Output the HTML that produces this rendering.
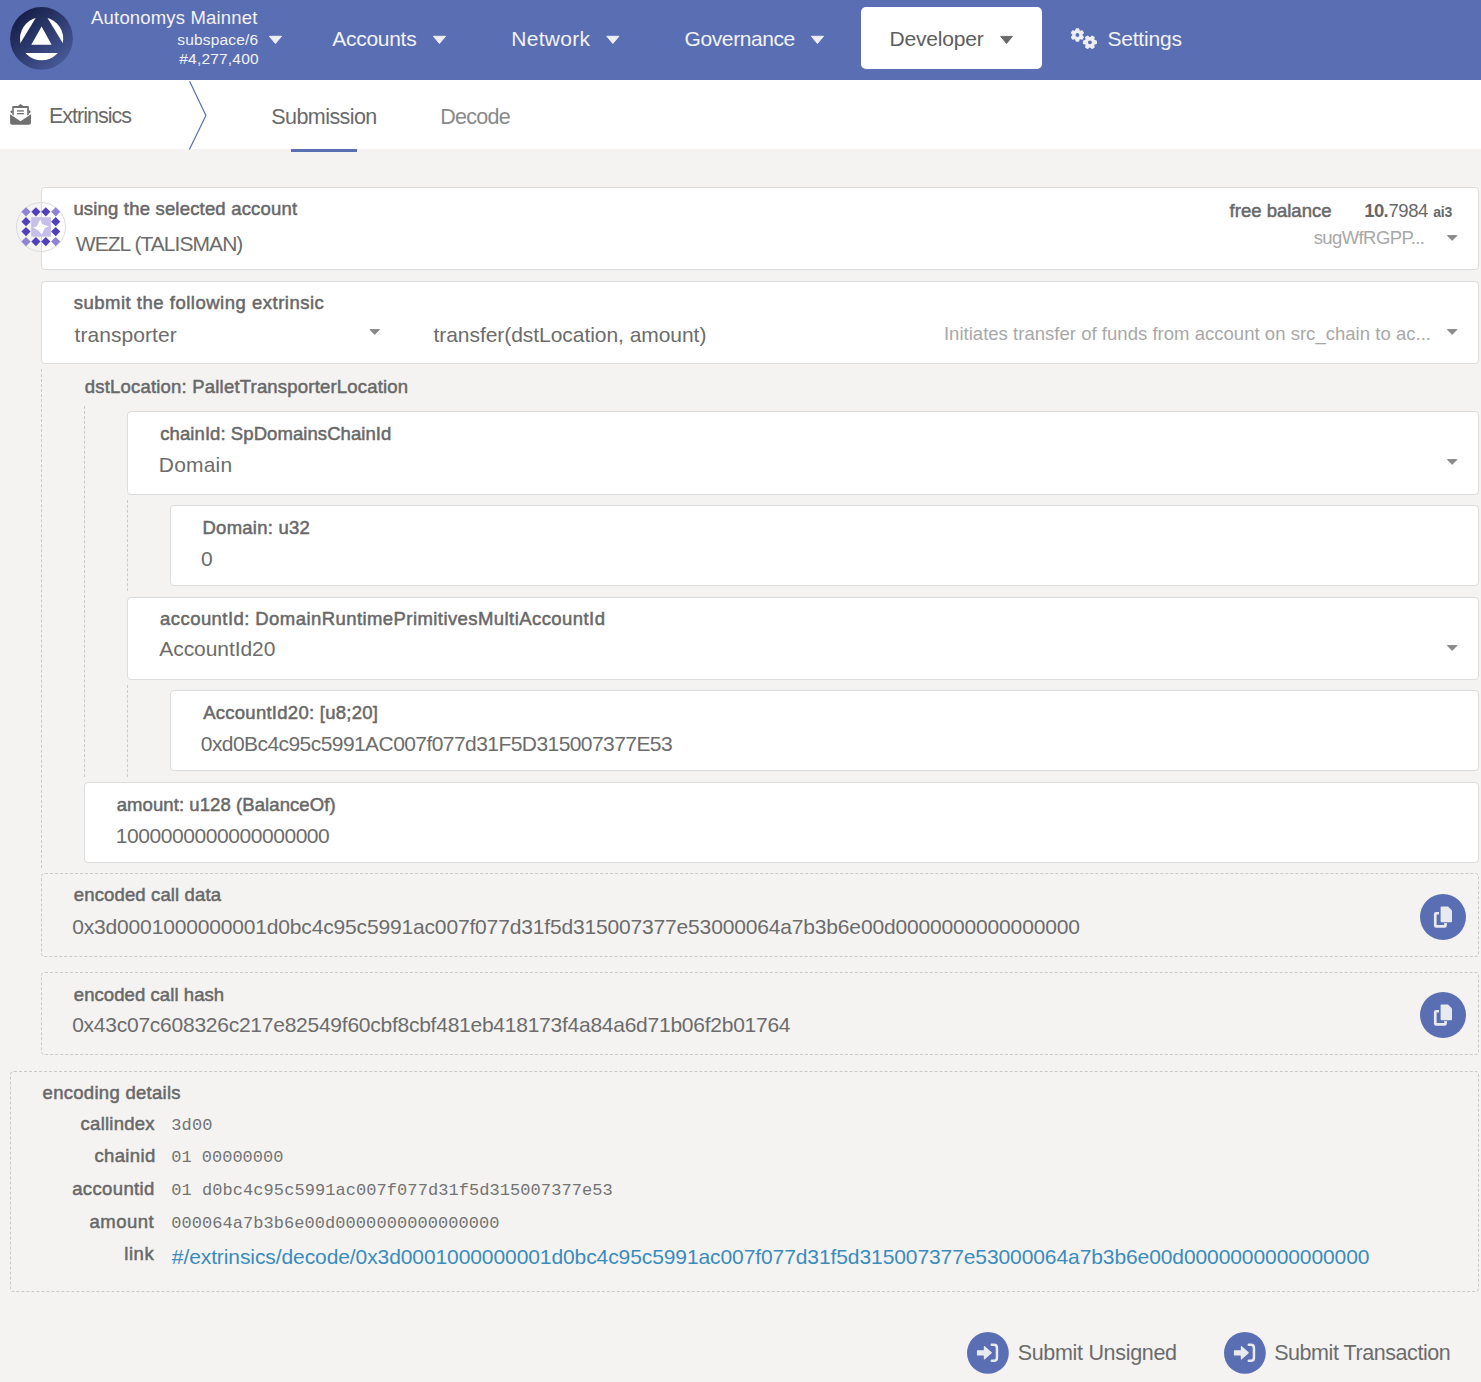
<!DOCTYPE html><html><head><meta charset="utf-8"><title>Extrinsics</title><style>
html,body{margin:0;padding:0}
body{width:1481px;height:1382px;overflow:hidden;position:relative;background:#f4f3f2;font-family:"Liberation Sans",sans-serif}
.t{position:absolute;white-space:pre;line-height:normal}
</style></head><body>
<div style="position:absolute;left:0px;top:0px;width:1481px;height:80px;background:#5a6fb3;"></div>
<div style="position:absolute;left:0px;top:80px;width:1481px;height:69px;background:#ffffff;"></div>
<svg style="position:absolute;left:0;top:0" width="84" height="80" viewBox="0 0 84 80">
<defs><linearGradient id="lg" gradientUnits="userSpaceOnUse" x1="18" y1="12" x2="66" y2="66"><stop offset="0" stop-color="#131c44"/><stop offset="1" stop-color="#4b5d9e"/></linearGradient></defs>
<circle cx="41.5" cy="38.4" r="31.4" fill="url(#lg)"/>
<circle cx="41.6" cy="38.7" r="21.6" fill="#fff"/>
<path d="M41.6 8.2 L68.8 53 L14.4 53 Z" fill="url(#lg)"/>
<path d="M41.6 26.6 L51.6 44.8 L31.3 44.8 Z" fill="#fff"/>
</svg>
<svg style="position:absolute;left:267px;top:34px" width="17" height="12" viewBox="0 0 17 12"><path d="M2.40 2.30 L14.50 2.30 L8.45 9.50 Z" fill="#eeeef4" stroke="#eeeef4" stroke-width="1" stroke-linejoin="round"/></svg>
<svg style="position:absolute;left:431px;top:34px" width="17" height="12" viewBox="0 0 17 12"><path d="M2.40 2.30 L14.50 2.30 L8.45 9.50 Z" fill="#eeeef4" stroke="#eeeef4" stroke-width="1" stroke-linejoin="round"/></svg>
<svg style="position:absolute;left:605px;top:34px" width="17" height="12" viewBox="0 0 17 12"><path d="M1.80 2.30 L13.90 2.30 L7.85 9.50 Z" fill="#eeeef4" stroke="#eeeef4" stroke-width="1" stroke-linejoin="round"/></svg>
<svg style="position:absolute;left:809px;top:34px" width="17" height="12" viewBox="0 0 17 12"><path d="M2.40 2.30 L14.50 2.30 L8.45 9.50 Z" fill="#eeeef4" stroke="#eeeef4" stroke-width="1" stroke-linejoin="round"/></svg>
<div style="position:absolute;left:861px;top:7px;width:181px;height:62px;background:#fff;border-radius:5px"></div>
<svg style="position:absolute;left:999px;top:34px" width="16" height="12" viewBox="0 0 16 12"><path d="M1.70 2.40 L13.40 2.40 L7.55 9.40 Z" fill="#6a6a6a" stroke="#6a6a6a" stroke-width="1" stroke-linejoin="round"/></svg>
<svg style="position:absolute;left:1064px;top:22px" width="40" height="32" viewBox="0 0 40 32">
<path d="M11.45 9.62 L12.32 6.89 L14.48 6.89 L15.35 9.62 L18.15 9.01 L19.23 10.88 L17.30 13.00 L19.23 15.12 L18.15 16.99 L15.35 16.38 L14.48 19.11 L12.32 19.11 L11.45 16.38 L8.65 16.99 L7.57 15.12 L9.50 13.00 L7.57 10.88 L8.65 9.01 Z" fill="#eeeef4" stroke="#eeeef4" stroke-width="1.4" stroke-linejoin="round"/>
<path d="M29.45 18.25 L32.20 19.19 L32.20 21.41 L29.45 22.35 L30.01 25.20 L28.09 26.31 L25.90 24.40 L23.71 26.31 L21.79 25.20 L22.35 22.35 L19.60 21.41 L19.60 19.19 L22.35 18.25 L21.79 15.40 L23.71 14.29 L25.90 16.20 L28.09 14.29 L30.01 15.40 Z" fill="#eeeef4" stroke="#eeeef4" stroke-width="1.4" stroke-linejoin="round"/>
<circle cx="13.4" cy="13" r="1.9" fill="#5a6fb3"/><circle cx="25.9" cy="20.3" r="1.9" fill="#5a6fb3"/>
</svg>
<svg style="position:absolute;left:6px;top:98px" width="30" height="30" viewBox="0 0 30 30">
<g fill="#707070">
<path d="M11.6 8.3 L14.5 5.9 L17.6 8.3 Z"/>
<path d="M7.2 8.1 L21.9 8.1 Q22.9 8.1 22.9 9.1 L22.9 16.6 L21.2 17.6 L21.2 9.9 L7.8 9.9 L7.8 17.6 L6.2 16.6 L6.2 9.1 Q6.2 8.1 7.2 8.1 Z"/>
<path d="M6.2 11.7 L4.1 13.9 L6.2 15.6 Z"/>
<path d="M22.9 11.7 L25 13.9 L22.9 15.6 Z"/>
<rect x="11" y="12.3" width="6.9" height="1.3"/>
<rect x="11" y="15" width="6.9" height="1.3"/>
<path d="M4.1 16.3 L14.5 23.3 L25 16.3 L25 24.7 Q25 26.7 23 26.7 L6.1 26.7 Q4.1 26.7 4.1 24.7 Z"/>
</g></svg>
<svg style="position:absolute;left:180px;top:80px" width="40" height="70" viewBox="0 0 40 70"><path d="M9.6 1.3 L25.9 35.4 L9.4 69.4" fill="none" stroke="#5a6fb3" stroke-width="1.2"/></svg>
<div style="position:absolute;left:291px;top:149px;width:66px;height:3px;background:#5a6fb3;"></div>
<div style="position:absolute;left:41px;top:187px;width:1438px;height:83px;box-sizing:border-box;background:#fff;border:1px solid #dcdcdc;border-radius:4px"></div>
<div style="position:absolute;left:41px;top:281px;width:1438px;height:83px;box-sizing:border-box;background:#fff;border:1px solid #dcdcdc;border-radius:4px"></div>
<div style="position:absolute;left:41px;top:369px;width:0;height:499px;border-left:1px dashed #c9c9c9"></div>
<div style="position:absolute;left:84px;top:406px;width:0;height:371px;border-left:1px dashed #c9c9c9"></div>
<div style="position:absolute;left:127px;top:411px;width:1352px;height:84px;box-sizing:border-box;background:#fff;border:1px solid #dcdcdc;border-radius:4px"></div>
<div style="position:absolute;left:127px;top:500px;width:0;height:91px;border-left:1px dashed #c9c9c9"></div>
<div style="position:absolute;left:170px;top:505px;width:1309px;height:81px;box-sizing:border-box;background:#fff;border:1px solid #dcdcdc;border-radius:4px"></div>
<div style="position:absolute;left:127px;top:597px;width:1352px;height:83px;box-sizing:border-box;background:#fff;border:1px solid #dcdcdc;border-radius:4px"></div>
<div style="position:absolute;left:127px;top:685px;width:0;height:92px;border-left:1px dashed #c9c9c9"></div>
<div style="position:absolute;left:170px;top:690px;width:1309px;height:81px;box-sizing:border-box;background:#fff;border:1px solid #dcdcdc;border-radius:4px"></div>
<div style="position:absolute;left:84px;top:782px;width:1395px;height:81px;box-sizing:border-box;background:#fff;border:1px solid #dcdcdc;border-radius:4px"></div>
<div style="position:absolute;left:41px;top:873px;width:1438px;height:84px;box-sizing:border-box;background:transparent;border:1px dashed #c9c9c9;border-radius:4px"></div>
<div style="position:absolute;left:41px;top:972px;width:1438px;height:83px;box-sizing:border-box;background:transparent;border:1px dashed #c9c9c9;border-radius:4px"></div>
<div style="position:absolute;left:10px;top:1071px;width:1469px;height:221px;box-sizing:border-box;background:transparent;border:1px dashed #c9c9c9;border-radius:4px"></div>
<svg style="position:absolute;left:1445px;top:234px" width="15" height="9" viewBox="0 0 15 9"><path d="M2.40 1.60 L11.90 1.60 L7.15 6.40 Z" fill="#8a8a8a" stroke="#8a8a8a" stroke-width="1" stroke-linejoin="round"/></svg>
<svg style="position:absolute;left:368px;top:328px" width="14" height="9" viewBox="0 0 14 9"><path d="M2.00 1.60 L11.50 1.60 L6.75 6.40 Z" fill="#8a8a8a" stroke="#8a8a8a" stroke-width="1" stroke-linejoin="round"/></svg>
<svg style="position:absolute;left:1445px;top:328px" width="15" height="9" viewBox="0 0 15 9"><path d="M2.40 1.60 L11.90 1.60 L7.15 6.40 Z" fill="#8a8a8a" stroke="#8a8a8a" stroke-width="1" stroke-linejoin="round"/></svg>
<svg style="position:absolute;left:1445px;top:458px" width="15" height="9" viewBox="0 0 15 9"><path d="M2.40 1.60 L11.90 1.60 L7.15 6.40 Z" fill="#8a8a8a" stroke="#8a8a8a" stroke-width="1" stroke-linejoin="round"/></svg>
<svg style="position:absolute;left:1445px;top:644px" width="15" height="9" viewBox="0 0 15 9"><path d="M2.40 1.60 L11.90 1.60 L7.15 6.40 Z" fill="#8a8a8a" stroke="#8a8a8a" stroke-width="1" stroke-linejoin="round"/></svg>
<svg style="position:absolute;left:16px;top:202px" width="50" height="50" viewBox="0 0 50 50"><circle cx="25" cy="25" r="24.5" fill="none" stroke="#dadada" stroke-width="1"/><path d="M10 5.200000000000012 L14.6 9.800000000000011 L10 14.400000000000011 L5.4 9.800000000000011 Z" fill="#8f83d8"/><path d="M19.9 5.200000000000012 L24.5 9.800000000000011 L19.9 14.400000000000011 L15.299999999999999 9.800000000000011 Z" fill="#5040bb"/><path d="M29.799999999999997 5.200000000000012 L34.4 9.800000000000011 L29.799999999999997 14.400000000000011 L25.199999999999996 9.800000000000011 Z" fill="#5040bb"/><path d="M39.7 5.200000000000012 L44.300000000000004 9.800000000000011 L39.7 14.400000000000011 L35.1 9.800000000000011 Z" fill="#8f83d8"/><path d="M10 15.099999999999989 L14.6 19.69999999999999 L10 24.29999999999999 L5.4 19.69999999999999 Z" fill="#5040bb"/><path d="M39.7 15.099999999999989 L44.300000000000004 19.69999999999999 L39.7 24.29999999999999 L35.1 19.69999999999999 Z" fill="#5040bb"/><path d="M10 24.999999999999993 L14.6 29.599999999999994 L10 34.199999999999996 L5.4 29.599999999999994 Z" fill="#5040bb"/><path d="M39.7 24.999999999999993 L44.300000000000004 29.599999999999994 L39.7 34.199999999999996 L35.1 29.599999999999994 Z" fill="#5040bb"/><path d="M10 34.99999999999999 L14.6 39.599999999999994 L10 44.199999999999996 L5.4 39.599999999999994 Z" fill="#8f83d8"/><path d="M19.9 34.99999999999999 L24.5 39.599999999999994 L19.9 44.199999999999996 L15.299999999999999 39.599999999999994 Z" fill="#5040bb"/><path d="M29.799999999999997 34.99999999999999 L34.4 39.599999999999994 L29.799999999999997 44.199999999999996 L25.199999999999996 39.599999999999994 Z" fill="#5040bb"/><path d="M39.7 34.99999999999999 L44.300000000000004 39.599999999999994 L39.7 44.199999999999996 L35.1 39.599999999999994 Z" fill="#8f83d8"/><rect x="15.2" y="15.2" width="19.7" height="19.5" fill="#c6bfea"/><path d="M24.3 17.3 L26 22 L33 24.4 L28.8 26.1 L25.6 32.7 Q23.5 28 16.8 25.8 L20.9 24.3 Z" fill="#fff"/></svg>
<svg style="position:absolute;left:1420px;top:893.9px" width="46" height="46" viewBox="0 0 46 46"><circle cx="23" cy="23" r="23" fill="#5a6fb3"/><g transform="translate(23,23)"><path d="M-1.4 -10.5 L5 -10.5 L9 -6.5 L9 4.2 Q9 5.2 8 5.2 L-1.4 5.2 Q-2.4 5.2 -2.4 4.2 L-2.4 -9.5 Q-2.4 -10.5 -1.4 -10.5 Z" fill="#e9e9f0"/><path d="M-4 -3.75 L-6.75 -3.75 Q-7.75 -3.75 -7.75 -2.75 L-7.75 8.4 Q-7.75 9.4 -6.75 9.4 L1.55 9.4 Q2.55 9.4 2.55 8.4 L2.55 6" fill="none" stroke="#e9e9f0" stroke-width="2.7" stroke-linejoin="round"/></g></svg>
<svg style="position:absolute;left:1420px;top:992.3px" width="46" height="46" viewBox="0 0 46 46"><circle cx="23" cy="23" r="23" fill="#5a6fb3"/><g transform="translate(23,23)"><path d="M-1.4 -10.5 L5 -10.5 L9 -6.5 L9 4.2 Q9 5.2 8 5.2 L-1.4 5.2 Q-2.4 5.2 -2.4 4.2 L-2.4 -9.5 Q-2.4 -10.5 -1.4 -10.5 Z" fill="#e9e9f0"/><path d="M-4 -3.75 L-6.75 -3.75 Q-7.75 -3.75 -7.75 -2.75 L-7.75 8.4 Q-7.75 9.4 -6.75 9.4 L1.55 9.4 Q2.55 9.4 2.55 8.4 L2.55 6" fill="none" stroke="#e9e9f0" stroke-width="2.7" stroke-linejoin="round"/></g></svg>
<svg style="position:absolute;left:967.15px;top:1332.0px" width="41.8" height="41.8" viewBox="0 0 41.8 41.8"><circle cx="20.9" cy="20.9" r="20.9" fill="#5a6fb3"/><g transform="translate(20.9,20.9)"><path d="M-10.4 -2.1 L-4 -2.1 L-4 2.1 L-10.4 2.1 Z" fill="#e9e9f0" stroke="#e9e9f0" stroke-width="1.2" stroke-linejoin="round"/><path d="M-3.5 -6.2 L3.3 -0.1 L-3.5 6.0 Z" fill="#e9e9f0" stroke="#e9e9f0" stroke-width="1.2" stroke-linejoin="round"/><path d="M3.85 -8.1 L6 -8.1 Q9.05 -8.1 9.05 -5 L9.05 4.8 Q9.05 7.9 6 7.9 L3.85 7.9" fill="none" stroke="#e9e9f0" stroke-width="2.5" stroke-linecap="round"/></g></svg>
<svg style="position:absolute;left:1224.0px;top:1332.0px" width="41.8" height="41.8" viewBox="0 0 41.8 41.8"><circle cx="20.9" cy="20.9" r="20.9" fill="#5a6fb3"/><g transform="translate(20.9,20.9)"><path d="M-10.4 -2.1 L-4 -2.1 L-4 2.1 L-10.4 2.1 Z" fill="#e9e9f0" stroke="#e9e9f0" stroke-width="1.2" stroke-linejoin="round"/><path d="M-3.5 -6.2 L3.3 -0.1 L-3.5 6.0 Z" fill="#e9e9f0" stroke="#e9e9f0" stroke-width="1.2" stroke-linejoin="round"/><path d="M3.85 -8.1 L6 -8.1 Q9.05 -8.1 9.05 -5 L9.05 4.8 Q9.05 7.9 6 7.9 L3.85 7.9" fill="none" stroke="#e9e9f0" stroke-width="2.5" stroke-linecap="round"/></g></svg>
<div class="t" style="left:91.1px;top:7px;font-family:'Liberation Sans', sans-serif;font-weight:400;font-size:18.5px;letter-spacing:0.175px;color:#f2f2f7">Autonomys Mainnet</div>
<div class="t" style="left:177.3px;top:31px;font-family:'Liberation Sans', sans-serif;font-weight:400;font-size:15.5px;letter-spacing:0.178px;color:#f2f2f7">subspace/6</div>
<div class="t" style="left:179.3px;top:50px;font-family:'Liberation Sans', sans-serif;font-weight:400;font-size:15.5px;letter-spacing:0.189px;color:#f2f2f7">#4,277,400</div>
<div class="t" style="left:332.2px;top:27px;font-family:'Liberation Sans', sans-serif;font-weight:400;font-size:21px;letter-spacing:-0.271px;color:#f2f2f7">Accounts</div>
<div class="t" style="left:511.3px;top:27px;font-family:'Liberation Sans', sans-serif;font-weight:400;font-size:21px;letter-spacing:0.283px;color:#f2f2f7">Network</div>
<div class="t" style="left:684.6px;top:27px;font-family:'Liberation Sans', sans-serif;font-weight:400;font-size:21px;letter-spacing:-0.411px;color:#f2f2f7">Governance</div>
<div class="t" style="left:889.4px;top:27px;font-family:'Liberation Sans', sans-serif;font-weight:400;font-size:21px;letter-spacing:-0.162px;color:#5e5e5e">Developer</div>
<div class="t" style="left:1107.4px;top:27px;font-family:'Liberation Sans', sans-serif;font-weight:400;font-size:21px;letter-spacing:-0.186px;color:#f2f2f7">Settings</div>
<div class="t" style="left:49.0px;top:104px;font-family:'Liberation Sans', sans-serif;font-weight:400;font-size:21.5px;letter-spacing:-1.0px;color:#6a6a6a">Extrinsics</div>
<div class="t" style="left:271.3px;top:105px;font-family:'Liberation Sans', sans-serif;font-weight:400;font-size:21.5px;letter-spacing:-0.567px;color:#6a6a6a">Submission</div>
<div class="t" style="left:440.3px;top:105px;font-family:'Liberation Sans', sans-serif;font-weight:400;font-size:21.5px;letter-spacing:-0.76px;color:#8a8a8a">Decode</div>
<div class="t" style="left:73.4px;top:198px;font-family:'Liberation Sans', sans-serif;font-weight:400;-webkit-text-stroke:0.5px #686868;font-size:18.5px;letter-spacing:0.184px;color:#686868">using the selected account</div>
<div class="t" style="left:75.8px;top:232px;font-family:'Liberation Sans', sans-serif;font-weight:400;font-size:21px;letter-spacing:-0.95px;color:#6c6c6c">WEZL (TALISMAN)</div>
<div class="t" style="left:1229.6px;top:200px;font-family:'Liberation Sans', sans-serif;font-weight:400;-webkit-text-stroke:0.5px #686868;font-size:18.5px;letter-spacing:0.009px;color:#686868">free balance</div>
<div class="t" style="left:1364.2px;top:200px;font-family:'Liberation Sans', sans-serif;font-weight:700;font-size:18.5px;letter-spacing:-0.6px;color:#686868">10.</div>
<div class="t" style="left:1388.5px;top:200px;font-family:'Liberation Sans', sans-serif;font-weight:400;font-size:18.5px;letter-spacing:-0.467px;color:#686868">7984</div>
<div class="t" style="left:1433.2px;top:204px;font-family:'Liberation Sans', sans-serif;font-weight:700;font-size:14px;letter-spacing:-0.15px;color:#686868">ai3</div>
<div class="t" style="left:1313.7px;top:227px;font-family:'Liberation Sans', sans-serif;font-weight:400;font-size:18.5px;letter-spacing:-0.6px;color:#a8a8a8">sugWfRGPP...</div>
<div class="t" style="left:73.7px;top:292px;font-family:'Liberation Sans', sans-serif;font-weight:400;-webkit-text-stroke:0.5px #686868;font-size:18.5px;letter-spacing:0.507px;color:#686868">submit the following extrinsic</div>
<div class="t" style="left:74.6px;top:323px;font-family:'Liberation Sans', sans-serif;font-weight:400;font-size:21px;letter-spacing:0.06px;color:#6c6c6c">transporter</div>
<div class="t" style="left:433.5px;top:323px;font-family:'Liberation Sans', sans-serif;font-weight:400;font-size:21px;letter-spacing:-0.05px;color:#6c6c6c">transfer(dstLocation, amount)</div>
<div class="t" style="left:943.9px;top:323px;font-family:'Liberation Sans', sans-serif;font-weight:400;font-size:18.5px;letter-spacing:0.028px;color:#a8a8a8">Initiates transfer of funds from account on src_chain to ac...</div>
<div class="t" style="left:84.8px;top:376px;font-family:'Liberation Sans', sans-serif;font-weight:400;-webkit-text-stroke:0.5px #686868;font-size:18.5px;letter-spacing:0.197px;color:#686868">dstLocation: PalletTransporterLocation</div>
<div class="t" style="left:160.3px;top:423px;font-family:'Liberation Sans', sans-serif;font-weight:400;-webkit-text-stroke:0.5px #686868;font-size:18.5px;letter-spacing:0.071px;color:#686868">chainId: SpDomainsChainId</div>
<div class="t" style="left:158.8px;top:453px;font-family:'Liberation Sans', sans-serif;font-weight:400;font-size:21px;letter-spacing:0.18px;color:#6c6c6c">Domain</div>
<div class="t" style="left:202.5px;top:517px;font-family:'Liberation Sans', sans-serif;font-weight:400;-webkit-text-stroke:0.5px #686868;font-size:18.5px;letter-spacing:0.24px;color:#686868">Domain: u32</div>
<div class="t" style="left:200.9px;top:547px;font-family:'Liberation Sans', sans-serif;font-weight:400;font-size:21px;letter-spacing:0px;color:#6c6c6c">0</div>
<div class="t" style="left:160.1px;top:608px;font-family:'Liberation Sans', sans-serif;font-weight:400;-webkit-text-stroke:0.5px #686868;font-size:18.5px;letter-spacing:0.43px;color:#686868">accountId: DomainRuntimePrimitivesMultiAccountId</div>
<div class="t" style="left:159.3px;top:637px;font-family:'Liberation Sans', sans-serif;font-weight:400;font-size:21px;letter-spacing:-0.07px;color:#6c6c6c">AccountId20</div>
<div class="t" style="left:203.2px;top:702px;font-family:'Liberation Sans', sans-serif;font-weight:400;-webkit-text-stroke:0.5px #686868;font-size:18.5px;letter-spacing:0.263px;color:#686868">AccountId20: [u8;20]</div>
<div class="t" style="left:200.8px;top:732px;font-family:'Liberation Sans', sans-serif;font-weight:400;font-size:21px;letter-spacing:-0.566px;color:#6c6c6c">0xd0Bc4c95c5991AC007f077d31F5D315007377E53</div>
<div class="t" style="left:116.7px;top:794px;font-family:'Liberation Sans', sans-serif;font-weight:400;-webkit-text-stroke:0.5px #686868;font-size:18.5px;letter-spacing:0.083px;color:#686868">amount: u128 (BalanceOf)</div>
<div class="t" style="left:115.7px;top:824px;font-family:'Liberation Sans', sans-serif;font-weight:400;font-size:21px;letter-spacing:-0.433px;color:#6c6c6c">1000000000000000000</div>
<div class="t" style="left:73.8px;top:884px;font-family:'Liberation Sans', sans-serif;font-weight:400;-webkit-text-stroke:0.5px #686868;font-size:18.5px;letter-spacing:0.137px;color:#686868">encoded call data</div>
<div class="t" style="left:72.2px;top:915px;font-family:'Liberation Sans', sans-serif;font-weight:400;font-size:21px;letter-spacing:-0.161px;color:#6c6c6c">0x3d0001000000001d0bc4c95c5991ac007f077d31f5d315007377e53000064a7b3b6e00d0000000000000000</div>
<div class="t" style="left:73.8px;top:984px;font-family:'Liberation Sans', sans-serif;font-weight:400;-webkit-text-stroke:0.5px #686868;font-size:18.5px;letter-spacing:0.075px;color:#686868">encoded call hash</div>
<div class="t" style="left:72.2px;top:1013px;font-family:'Liberation Sans', sans-serif;font-weight:400;font-size:21px;letter-spacing:-0.249px;color:#6c6c6c">0x43c07c608326c217e82549f60cbf8cbf481eb418173f4a84a6d71b06f2b01764</div>
<div class="t" style="left:42.6px;top:1082px;font-family:'Liberation Sans', sans-serif;font-weight:400;-webkit-text-stroke:0.5px #686868;font-size:18.5px;letter-spacing:0.287px;color:#686868">encoding details</div>
<div class="t" style="left:80.6px;top:1113px;font-family:'Liberation Sans', sans-serif;font-weight:400;-webkit-text-stroke:0.5px #686868;font-size:18.5px;letter-spacing:0.25px;color:#686868">callindex</div>
<div class="t" style="left:171.2px;top:1116px;font-family:'Liberation Mono', monospace;font-weight:400;font-size:17px;letter-spacing:0.167px;color:#737373">3d00</div>
<div class="t" style="left:94.4px;top:1145px;font-family:'Liberation Sans', sans-serif;font-weight:400;-webkit-text-stroke:0.5px #686868;font-size:18.5px;letter-spacing:0.367px;color:#686868">chainid</div>
<div class="t" style="left:171.2px;top:1148px;font-family:'Liberation Mono', monospace;font-weight:400;font-size:17px;letter-spacing:0.0px;color:#737373">01 00000000</div>
<div class="t" style="left:72.2px;top:1178px;font-family:'Liberation Sans', sans-serif;font-weight:400;-webkit-text-stroke:0.5px #686868;font-size:18.5px;letter-spacing:0.375px;color:#686868">accountid</div>
<div class="t" style="left:171.2px;top:1181px;font-family:'Liberation Mono', monospace;font-weight:400;font-size:17px;letter-spacing:0.067px;color:#737373">01 d0bc4c95c5991ac007f077d31f5d315007377e53</div>
<div class="t" style="left:89.4px;top:1211px;font-family:'Liberation Sans', sans-serif;font-weight:400;-webkit-text-stroke:0.5px #686868;font-size:18.5px;letter-spacing:0.52px;color:#686868">amount</div>
<div class="t" style="left:171.2px;top:1214px;font-family:'Liberation Mono', monospace;font-weight:400;font-size:17px;letter-spacing:0.058px;color:#737373">000064a7b3b6e00d0000000000000000</div>
<div class="t" style="left:124.2px;top:1243px;font-family:'Liberation Sans', sans-serif;font-weight:400;-webkit-text-stroke:0.5px #686868;font-size:18.5px;letter-spacing:0.6px;color:#686868">link</div>
<div class="t" style="left:171.8px;top:1245px;font-family:'Liberation Sans', sans-serif;font-weight:400;font-size:21px;letter-spacing:-0.091px;color:#3a8cbd">#/extrinsics/decode/0x3d0001000000001d0bc4c95c5991ac007f077d31f5d315007377e53000064a7b3b6e00d0000000000000000</div>
<div class="t" style="left:1017.7px;top:1341px;font-family:'Liberation Sans', sans-serif;font-weight:400;font-size:21.5px;letter-spacing:-0.314px;color:#6c6c6c">Submit Unsigned</div>
<div class="t" style="left:1274.2px;top:1341px;font-family:'Liberation Sans', sans-serif;font-weight:400;font-size:21.5px;letter-spacing:-0.441px;color:#6c6c6c">Submit Transaction</div>
</body></html>
